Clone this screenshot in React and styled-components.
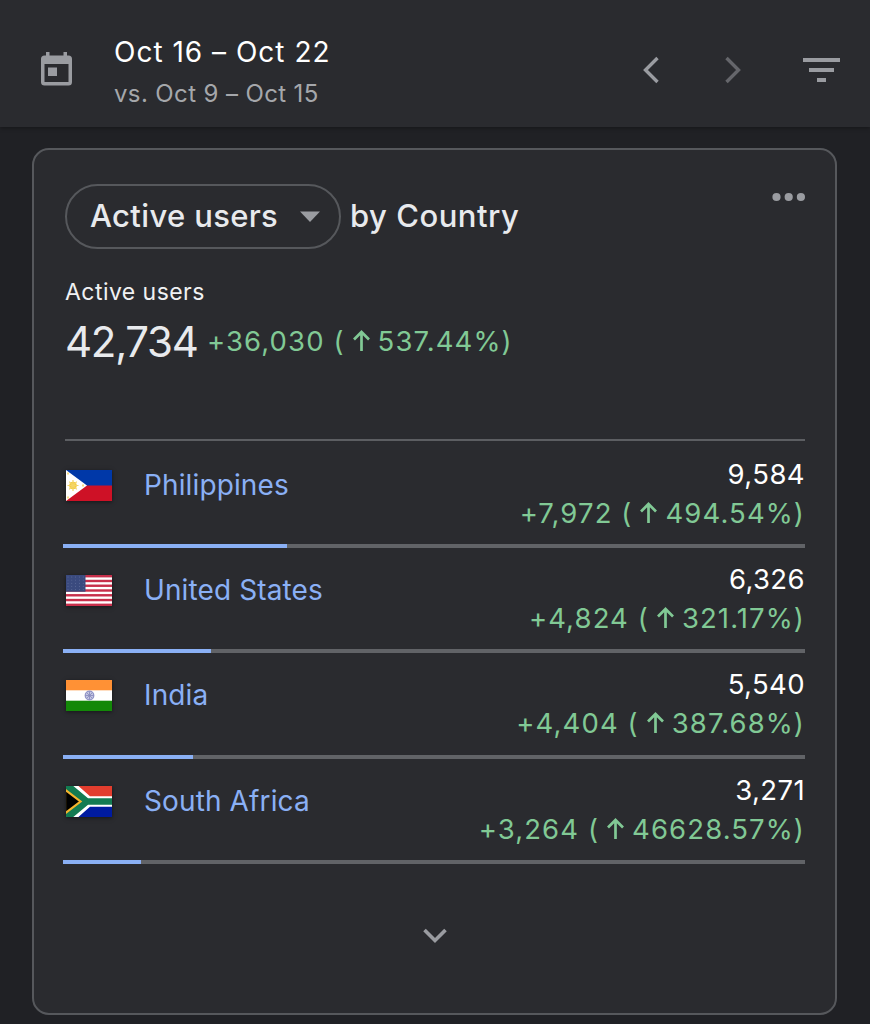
import React from "react";
import styled, { createGlobalStyle } from "styled-components";

const GlobalStyle = createGlobalStyle`
  * { box-sizing: border-box; }
  body { margin: 0; background: #202124; }
`;

const Page = styled.div`
  width: 870px;
  height: 1024px;
  overflow: hidden;
  background: #202125;
  color: #fff;
  font-family: Inter, "Liberation Sans", sans-serif;
  white-space: nowrap;
`;

const Header = styled.header`
  display: flex;
  align-items: center;
  height: 127px;
  padding: 0 30px 0 40px;
  background: #2a2b2f;
  box-shadow: 0 1px 4px rgba(0, 0, 0, 0.35);
`;

const DateRange = styled.div`
  flex: 1;
  margin-left: 40px;
  padding-top: 17px;
`;

const Period = styled.div`
  font-size: 28px;
  line-height: 36px;
  letter-spacing: 1px;
  font-weight: 420;
`;

const Comparison = styled.div`
  margin-top: 7px;
  font-size: 24px;
  line-height: 34px;
  letter-spacing: 0.38px;
  color: #a5a7ab;
`;

const HeaderIcon = styled.svg`
  display: block;
  flex: none;
  margin-top: ${(p) => p.$drop}px;
  margin-left: ${(p) => p.$gap || 0}px;
`;

const Card = styled.main`
  width: 805px;
  height: 867px;
  margin: 21px 0 0 32px;
  padding: 34px 30px 0 31px;
  border: 2px solid #56585c;
  border-radius: 17px;
  background: #2a2b2f;
`;

const TitleBar = styled.div`
  display: flex;
  align-items: flex-start;
  height: 65px;
`;

const MetricSelect = styled.button`
  display: flex;
  align-items: center;
  justify-content: space-between;
  width: 276px;
  height: 65px;
  padding: 0 19px 0 23px;
  border: 2px solid #56585c;
  border-radius: 33px;
  background: transparent;
  color: #e8eaed;
  font: 450 31px/60px Inter, sans-serif;
  letter-spacing: 0.35px;
`;

const MetricName = styled.span`
  padding-bottom: 2px;
`;

const Dimension = styled.h1`
  flex: 1;
  margin: 0 0 0 9px;
  color: #e8eaed;
  font: 450 31px/64px Inter, sans-serif;
  letter-spacing: 0.5px;
`;

const MenuDots = styled.svg`
  display: block;
  flex: none;
  margin-top: 8px;
`;

const Label = styled.div`
  margin-top: 27px;
  font-size: 23px;
  line-height: 32px;
  letter-spacing: 0.45px;
  color: #f0f1f3;
`;

const Summary = styled.div`
  display: flex;
  align-items: flex-start;
  height: 131px;
  padding-top: 7px;
`;

const Total = styled.div`
  width: 142px;
  color: #e8eaed;
  font-size: 42px;
  line-height: 54px;
  letter-spacing: -1.3px;
`;

const Delta = styled.div`
  display: flex;
  align-items: baseline;
  font-size: 27.5px;
  line-height: 38px;
  letter-spacing: 1.1px;
  color: #81c995;
`;

const SummaryDelta = styled.div`
  padding-top: 7px;
`;

const Arrow = styled.svg`
  flex: none;
  width: 17px;
  height: 21px;
  margin: 0 8px 0 8px;
`;

const List = styled.ul`
  margin: 0;
  padding: 2px 0 0;
  border-top: 2px solid #5c5e62;
  list-style: none;
`;

const Row = styled.li`
  display: flex;
  flex-direction: column;
  height: 105.2px;
  margin-left: -2px;
`;

const RowBody = styled.div`
  display: flex;
  height: 101.2px;
  padding-left: 3px;
`;

const Flag = styled.svg`
  flex: none;
  width: 46px;
  height: 31px;
  margin: 27px 32px 0 0;
  box-shadow: 0 1px 4px rgba(0, 0, 0, 0.5);
`;

const Country = styled.a`
  flex: 1;
  padding-top: 24px;
  font-size: 28px;
  line-height: 36px;
  letter-spacing: 0.12px;
  color: #8ab0f5;
`;

const Values = styled.div`
  display: flex;
  flex-direction: column;
  align-items: flex-end;
  gap: 1px;
  padding-top: 12px;
`;

const Value = styled.div`
  font-size: 27.5px;
  line-height: 38px;
  letter-spacing: 0.4px;
`;

const Track = styled.div`
  height: 4px;
  background: #616367;
`;

const Fill = styled.div`
  height: 4px;
  background: #8ab0f5;
`;

const More = styled.div`
  display: flex;
  justify-content: center;
  padding-top: 63.5px;
`;

function Change({ amount, percent }) {
  return (
    <Delta>
      <span>{amount} (</span>
      <Arrow viewBox="0 0 17 21" fill="none" stroke="#81c995" strokeWidth="2.7">
        <path d="M8.500 21V2M1 9.500L8.500 2l7.500 7.500" />
      </Arrow>
      <span>{percent})</span>
    </Delta>
  );
}

const flags = {
  ph: (
    <>
      <rect width="46" height="16" fill="#0038a8" />
      <rect y="15.5" width="46" height="15.5" fill="#ce1126" />
      <path d="M0 0L21 15.5 0 31z" fill="#fff" />
      <circle cx="7" cy="15.5" r="3.8" fill="#f2cc45" />
      <path
        d="M7 10v11M1.500 15.500h11M3.200 11.700l7.600 7.600M10.800 11.700l-7.600 7.600"
        stroke="#f4d565"
        strokeWidth="1.200"
      />
      <path d="M1 3.500h2M1 27.500h2M16 15.500h2" stroke="#f6dc85" strokeWidth="2" />
    </>
  ),
  us: (
    <>
      <rect width="46" height="31" fill="#fff" />
      {[0, 1, 2, 3, 4, 5, 6].map((i) => (
        <rect key={i} y={i * 4.77} width="46" height="2.4" fill="#c72f4b" />
      ))}
      <rect width="19.500" height="16.700" fill="#3a4a7e" />
      {[0, 1, 2, 3, 4].map((r) =>
        [0, 1, 2, 3, 4].map((c) => (
          <circle key={`${r}${c}`} cx={2 + c * 3.8} cy={2 + r * 3.1} r="0.45" fill="#7683ab" />
        ))
      )}
    </>
  ),
  in: (
    <>
      <rect width="46" height="31" fill="#fff" />
      <rect width="46" height="10.300" fill="#ff9135" />
      <rect y="20.700" width="46" height="10.300" fill="#138808" />
      <circle cx="23.500" cy="15.500" r="4.300" fill="#c4c6e3" stroke="#9093c6" strokeWidth="1.200" />
      <path d="M19.500 15.500h8M23.500 11.500v8M20.700 12.700l5.600 5.600M26.300 12.700l-5.600 5.600" stroke="#8589bd" strokeWidth=".8" />
    </>
  ),
  za: (
    <>
      <rect width="46" height="15.500" fill="#e23d2e" />
      <rect y="15.500" width="46" height="15.500" fill="#001ba0" />
      <path d="M0 -4L22 15.500 0 35M21 15.500h25" fill="none" stroke="#fff" strokeWidth="10.500" />
      <path d="M0 -4V35L22 15.500z" fill="#137b52" />
      <path d="M0 -2L21 15.500 0 33M20 15.500h26" fill="none" stroke="#137b52" strokeWidth="6.300" />
      <path d="M-1 3.500L14.500 15.500-1 27.500z" fill="#000" stroke="#f5b32d" strokeWidth="2.200" />
    </>
  ),
};

const countries = [
  { code: "ph", name: "Philippines", value: "9,584", amount: "+7,972", percent: "494.54%", share: 30.2 },
  { code: "us", name: "United States", value: "6,326", amount: "+4,824", percent: "321.17%", share: 20 },
  { code: "in", name: "India", value: "5,540", amount: "+4,404", percent: "387.68%", share: 17.55 },
  { code: "za", name: "South Africa", value: "3,271", amount: "+3,264", percent: "46628.57%", share: 10.5 },
];

export default function App() {
  return (
    <Page>
      <GlobalStyle />
      <Header>
        <HeaderIcon $drop={10} width="34" height="36" viewBox="0 0 34 36">
          <path
            fillRule="evenodd"
            fill="#9a9ca1"
            d="M6 1h3.500v3.500h14V1H27v3.500h1.500a3.500 3.500 0 0 1 3.500 3.500v23a3.500 3.500 0 0 1-3.500 3.500h-24A3.500 3.500 0 0 1 1 31V8a3.500 3.500 0 0 1 3.500-3.500H6zM4.500 13v18h24V13zM8 16.500h9v8.500H8z"
          />
        </HeaderIcon>
        <DateRange>
          <Period>Oct 16 – Oct 22</Period>
          <Comparison>vs. Oct 9 – Oct 15</Comparison>
        </DateRange>
        <HeaderIcon $drop={13} width="18" height="28" viewBox="0 0 18 28" fill="none" stroke="#9a9ca1" strokeWidth="3.4">
          <path d="M15.500 2L3.500 14l12 12" />
        </HeaderIcon>
        <HeaderIcon $drop={13} $gap={64} width="18" height="28" viewBox="0 0 18 28" fill="none" stroke="#65666b" strokeWidth="3.4">
          <path d="M2.500 2l12 12-12 12" />
        </HeaderIcon>
        <HeaderIcon $drop={13} $gap={61} width="37" height="26" viewBox="0 0 37 26" fill="#9a9ca1">
          <path d="M0 1h37v4H0zM6 11h25v4H6zM14 21h9v4h-9z" />
        </HeaderIcon>
      </Header>
      <Card>
        <TitleBar>
          <MetricSelect>
            <MetricName>Active users</MetricName>
            <svg width="20" height="11" viewBox="0 0 20 11">
              <path d="M0 .5h20L10 11z" fill="#9a9ca1" />
            </svg>
          </MetricSelect>
          <Dimension>by Country</Dimension>
          <MenuDots width="33" height="10" viewBox="0 0 33 10" fill="#9a9ca1">
            <circle cx="4.500" cy="5" r="4.100" />
            <circle cx="16.700" cy="5" r="4.100" />
            <circle cx="28.900" cy="5" r="4.100" />
          </MenuDots>
        </TitleBar>
        <Label>Active users</Label>
        <Summary>
          <Total>42,734</Total>
          <SummaryDelta>
            <Change amount="+36,030" percent="537.44%" />
          </SummaryDelta>
        </Summary>
        <List>
          {countries.map((c) => (
            <Row key={c.code}>
              <RowBody>
                <Flag viewBox="0 0 46 31">{flags[c.code]}</Flag>
                <Country>{c.name}</Country>
                <Values>
                  <Value>{c.value}</Value>
                  <Change amount={c.amount} percent={c.percent} />
                </Values>
              </RowBody>
              <Track>
                <Fill style={{ width: `${c.share}%` }} />
              </Track>
            </Row>
          ))}
        </List>
        <More>
          <svg width="26" height="18" viewBox="0 0 26 18" fill="none" stroke="#9a9ca1" strokeWidth="3.6">
            <path d="M2.500 3L13 13.500 23.500 3" />
          </svg>
        </More>
      </Card>
    </Page>
  );
}
